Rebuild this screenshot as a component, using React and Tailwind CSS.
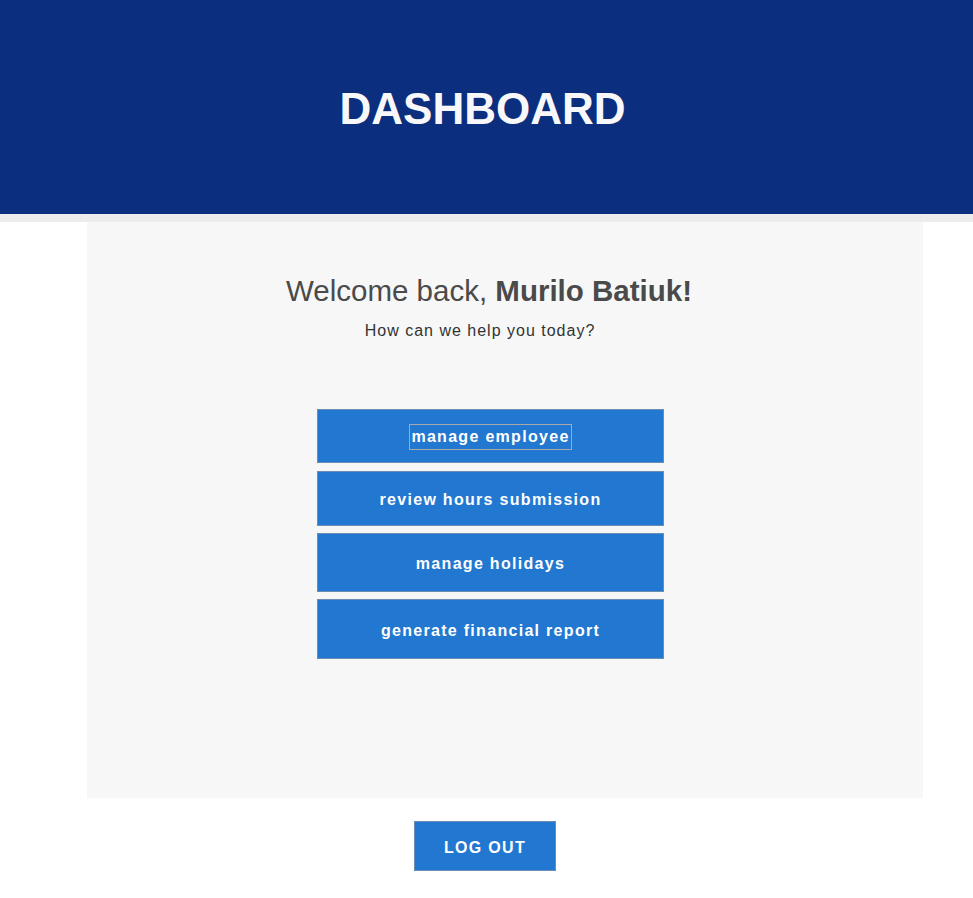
const actions = [
  { label: 'manage employee', h: 'h-[54px]', focused: true },
  { label: 'review hours submission', h: 'h-[55px]' },
  { label: 'manage holidays', h: 'h-[59px]' },
  { label: 'generate financial report', h: 'h-[60px]' },
]

export default function App() {
  return (
    <div className="min-h-[898px] bg-white font-['Liberation_Sans',Arial,sans-serif]">
      <header className="flex h-[214px] items-center justify-center bg-[#0b2f7e]">
        <h1 className="mt-[4px] mr-[8px] text-[44px] font-bold leading-none text-[#f8f8fb]">DASHBOARD</h1>
      </header>
      <div className="h-[8px] bg-[#ececec]" />

      <main className="ml-[87px] flex h-[576px] w-[836px] flex-col items-center bg-[#f7f7f7] pr-[32px] pt-[52px]">
        <h2 className="text-[29.5px] leading-[34px] text-[#4a4a4a]">
          Welcome back, <span className="font-bold">Murilo Batiuk!</span>
        </h2>
        <p className="mr-[18px] mt-[13px] text-[16px] leading-[20px] tracking-[1px] text-[#333]">
          How can we help you today?
        </p>

        <div className="ml-[3px] mt-[68px] flex w-[347px] flex-col gap-[7px]">
          {actions.map((a, i) => (
            <button
              key={a.label}
              className={`flex ${a.h} ${i === 1 ? 'mt-[1px]' : ''} w-full items-center justify-center border border-[#6b8cb3] bg-[#2277d0] pt-[3px] text-[16px] font-bold tracking-[1.3px] text-white`}
            >
              {a.focused ? (
                <span className="-mt-[1px] border border-[#a9a9a9] px-[1px] leading-[24px]">{a.label}</span>
              ) : (
                a.label
              )}
            </button>
          ))}
        </div>
      </main>

      <div className="flex justify-center pt-[23px]">
        <button className="mr-[3px] h-[50px] w-[142px] border border-[#6b8cb3] bg-[#2277d0] pt-[3px] text-[16px] font-bold tracking-[1.3px] text-white">
          LOG OUT
        </button>
      </div>
    </div>
  )
}
